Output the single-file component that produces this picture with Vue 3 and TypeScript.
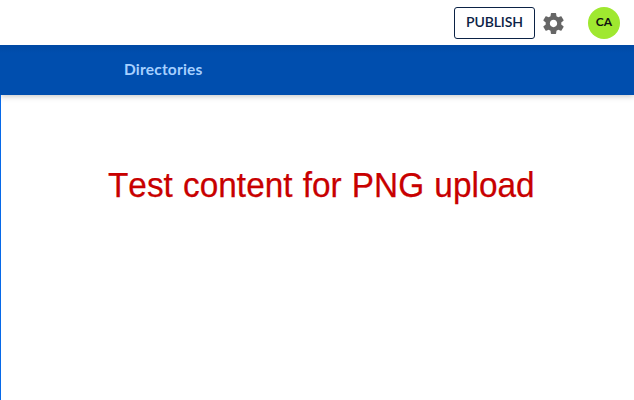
<script setup lang="ts">
const initials: string = 'CA'
const tabs: string[] = ['Directories']
</script>

<template>
  <div class="page">
    <header class="topbar">
      <button class="publish" type="button">PUBLISH</button>
      <svg class="gear" viewBox="0 0 24 24" aria-hidden="true">
        <path d="M19.43 12.98c.04-.32.07-.64.07-.98s-.03-.66-.07-.98l2.11-1.65c.19-.15.24-.42.12-.64l-2-3.46c-.12-.22-.39-.3-.61-.22l-2.49 1c-.52-.4-1.08-.73-1.69-.98l-.38-2.65C14.46 2.18 14.25 2 14 2h-4c-.25 0-.46.18-.49.42l-.38 2.65c-.61.25-1.17.59-1.69.98l-2.49-1c-.23-.09-.49 0-.61.22l-2 3.46c-.13.22-.07.49.12.64l2.11 1.65c-.04.32-.07.65-.07.98s.03.66.07.98l-2.11 1.65c-.19.15-.24.42-.12.64l2 3.46c.12.22.39.3.61.22l2.49-1c.52.4 1.08.73 1.69.98l.38 2.65c.03.24.24.42.49.42h4c.25 0 .46-.18.49-.42l.38-2.65c.61-.25 1.17-.59 1.69-.98l2.49 1c.23.09.49 0 .61-.22l2-3.46c.12-.22.07-.49-.12-.64l-2.11-1.65zM12 15.5c-1.93 0-3.5-1.57-3.5-3.5s1.57-3.5 3.5-3.5 3.5 1.57 3.5 3.5-1.57 3.5-3.5 3.5z" />
      </svg>
      <div class="avatar">{{ initials }}</div>
    </header>
    <nav class="nav">
      <a v-for="tab in tabs" :key="tab" class="tab">{{ tab }}</a>
    </nav>
    <main class="content">
      <h1 class="title">Test content for PNG upload</h1>
    </main>
  </div>
</template>

<style>
body {
  margin: 0;
  background: #fff;
}
</style>

<style scoped>
.page {
  display: flex;
  flex-direction: column;
  height: 400px;
  overflow: hidden;
  font-family: Lato, 'Open Sans', sans-serif;
}
.topbar {
  box-sizing: border-box;
  flex: none;
  z-index: 1;
  display: flex;
  justify-content: flex-end;
  height: 45px;
  padding: 7px 14px 0 0;
  background: #fff;
}
.publish {
  box-sizing: border-box;
  width: 81px;
  height: 32px;
  padding: 0 0 2px;
  border: 1px solid #0b2245;
  border-radius: 3px;
  background: #fff;
  color: #0b2245;
  font: 600 14px/28px Lato, sans-serif;
  letter-spacing: -0.1px;
}
.gear {
  width: 25px;
  height: 25px;
  margin: 4px 22px 0 6px;
  fill: #666;
}
.avatar {
  width: 32px;
  height: 32px;
  border-radius: 50%;
  background: #9fe830;
  color: #111;
  font-size: 12px;
  font-weight: 700;
  line-height: 30px;
  text-align: center;
}
.nav {
  box-sizing: border-box;
  flex: none;
  display: flex;
  align-items: center;
  height: 50px;
  padding: 0 0 2px 124px;
  background: linear-gradient(#0049a4, #004eae 8px);
  box-shadow: 0 1px 6px rgba(0, 0, 0, 0.25);
}
.tab {
  color: #a6d0ff;
  font-size: 15.5px;
  font-weight: 700;
  line-height: 20px;
  letter-spacing: 0.2px;
}
.content {
  flex: 1;
  border-left: 1px solid #0769e8;
}
.title {
  width: max-content;
  margin: 70px 0 0 107px;
  color: #c80000;
  font: 400 35px/40px 'Liberation Sans', Arial, sans-serif;
  font-kerning: none;
  word-spacing: 1px;
  -webkit-text-stroke: 0.25px #c80000;
  white-space: nowrap;
  transform: scaleX(0.953);
  transform-origin: left center;
}
</style>
